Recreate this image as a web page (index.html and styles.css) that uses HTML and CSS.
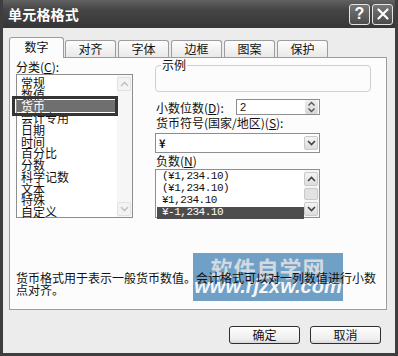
FILE: index.html
```html
<!DOCTYPE html>
<html lang="zh-CN">
<head>
    <meta charset="UTF-8">
    <title>单元格格式</title>
    <link rel="stylesheet" href="styles.css">
</head>
<body>
    <div class="window">
        <div class="titlebar">
            <span class="title">单元格格式</span>
            <div class="title-btns">
                <span class="tbtn">?</span>
                <span class="tbtn">
                    <svg width="12" height="12" viewBox="0 0 12 12"><path d="M1.5 1.5 L10.5 10.5 M10.5 1.5 L1.5 10.5" stroke="#fff" stroke-width="2.2" stroke-linecap="round"/></svg>
                </span>
            </div>
        </div>

        <div class="dialog">
            <div class="tabs">
                <div class="tab active">数字</div>
                <div class="tab">对齐</div>
                <div class="tab">字体</div>
                <div class="tab">边框</div>
                <div class="tab">图案</div>
                <div class="tab">保护</div>
            </div>

            <div class="panel">
                <div class="cols">
                    <div class="left">
                        <div class="lbl">分类(<u>C</u>):</div>
                        <div class="listbox cat">
                            <ul class="items">
                                <li>常规</li>
                                <li>数值</li>
                                <li class="picked">货币</li>
                                <li>会计专用</li>
                                <li>日期</li>
                                <li>时间</li>
                                <li>百分比</li>
                                <li>分数</li>
                                <li>科学记数</li>
                                <li>文本</li>
                                <li>特殊</li>
                                <li>自定义</li>
                            </ul>
                            <div class="vscroll">
                                <span class="sbtn off"><svg width="9" height="6" viewBox="0 0 9 6"><path d="M1 5 L4.5 1.5 L8 5" fill="none" stroke="#c4c4c4" stroke-width="1.6"/></svg></span>
                                <span class="track"></span>
                                <span class="sbtn off"><svg width="9" height="6" viewBox="0 0 9 6"><path d="M1 1 L4.5 4.5 L8 1" fill="none" stroke="#c4c4c4" stroke-width="1.6"/></svg></span>
                            </div>
                        </div>
                    </div>

                    <div class="right">
                        <div class="sample">
                            <span class="legend">示例</span>
                        </div>

                        <div class="row">
                            <span class="row-lbl">小数位数(<u>D</u>):</span>
                            <div class="spin">
                                <span class="spin-val">2</span>
                                <span class="spin-btns">
                                    <svg width="9" height="12" viewBox="0 0 9 12"><path d="M1.5 4.5 L4.5 1.5 L7.5 4.5 M1.5 7.5 L4.5 10.5 L7.5 7.5" fill="none" stroke="#555" stroke-width="1.4"/></svg>
                                </span>
                            </div>
                        </div>

                        <div class="lbl2">货币符号(国家/地区)(<u>S</u>):</div>
                        <div class="combo">
                            <span class="combo-val">¥</span>
                            <span class="sbtn"><svg width="9" height="6" viewBox="0 0 9 6"><path d="M1 1 L4.5 4.5 L8 1" fill="none" stroke="#444" stroke-width="1.6"/></svg></span>
                        </div>

                        <div class="lbl3">负数(<u>N</u>)</div>
                        <div class="listbox neg">
                            <ul class="items nums">
                                <li>(¥1,234.10)</li>
                                <li>(¥1,234.10)</li>
                                <li>¥1,234.10</li>
                                <li class="sel">¥-1,234.10</li>
                            </ul>
                            <div class="vscroll">
                                <span class="sbtn"><svg width="9" height="6" viewBox="0 0 9 6"><path d="M1 5 L4.5 1.5 L8 5" fill="none" stroke="#444" stroke-width="1.6"/></svg></span>
                                <span class="thumb"></span>
                                <span class="track"></span>
                                <span class="sbtn"><svg width="9" height="6" viewBox="0 0 9 6"><path d="M1 1 L4.5 4.5 L8 1" fill="none" stroke="#444" stroke-width="1.6"/></svg></span>
                            </div>
                        </div>
                    </div>
                </div>

                <p class="desc">货币格式用于表示一般货币数值。会计格式可以对一列数值进行小数<br>点对齐。</p>
            </div>

            <div class="actions">
                <button class="btn">确定</button>
                <button class="btn">取消</button>
            </div>
        </div>

        <div class="watermark">
            <div class="wm-top">软件自学网</div>
            <div class="wm-url">www.rjzxw.com</div>
        </div>
    </div>
</body>
</html>
```

FILE: styles.css
```css
* {
    box-sizing: border-box;
    margin: 0;
    padding: 0;
}

body {
    width: 398px;
    height: 356px;
    overflow: hidden;
    background: #3a3a3a;
    font-family: "Noto Sans CJK SC", sans-serif;
    font-size: 12px;
    color: #111;
}

u {
    text-decoration: underline;
}

.window {
    position: relative;
    width: 398px;
    height: 356px;
    display: flex;
    flex-direction: column;
    padding: 0 3px 3px;
    background: #3e3e3e;
}

/* title bar */
.titlebar {
    height: 28px;
    display: flex;
    align-items: center;
    justify-content: space-between;
    padding: 0 2px 0 5px;
    background: linear-gradient(#626262, #454545 35%, #363636);
    color: #fff;
}

.title {
    font-size: 14px;
    font-weight: bold;
    line-height: 16px;
    letter-spacing: 0.2px;
}

.title-btns {
    display: flex;
    gap: 2px;
}

.tbtn {
    width: 21px;
    height: 21px;
    display: flex;
    align-items: center;
    justify-content: center;
    border: 1px solid #e4e4e4;
    border-radius: 3px;
    background: linear-gradient(#777, #4b4b4b);
    font-family: "Liberation Sans", sans-serif;
    font-size: 16px;
    font-weight: bold;
    color: #fff;
}

/* dialog body */
.dialog {
    flex: 1;
    display: flex;
    flex-direction: column;
    padding: 9px 8px 0 6px;
    background: #ececec;
}

.tabs {
    display: flex;
    align-items: flex-end;
    gap: 2px;
    height: 20px;
    position: relative;
    z-index: 1;
}

.tab {
    width: 51px;
    height: 17px;
    border: 1px solid #9c9c9c;
    border-bottom: none;
    border-radius: 3px 3px 0 0;
    background: linear-gradient(#fdfdfd, #e8e8e8);
    text-align: center;
    line-height: 16px;
}

.tab.active {
    width: 55px;
    height: 21px;
    margin-bottom: -1px;
    margin-right: -1px;
    background: #fcfcfc;
    line-height: 18px;
}

.panel {
    height: 253px;
    display: flex;
    flex-direction: column;
    border: 1px solid #9c9c9c;
    background: #fcfcfc;
    padding: 0 0 0 6px;
}

.cols {
    display: flex;
    gap: 22px;
}

.left {
    width: 117px;
}

.lbl {
    height: 16px;
    line-height: 16px;
    padding-top: 1px;
}

.listbox {
    display: flex;
    border: 1px solid #8e8e8e;
    background: #fff;
}

.listbox.cat {
    height: 144px;
}

.items {
    flex: 1;
    list-style: none;
    padding: 2px 0 0 4px;
}

.items li {
    height: 11.7px;
    line-height: 11.7px;
    white-space: nowrap;
}

.items li.picked {
    position: relative;
    margin-left: -4px;
    padding-left: 4px;
    height: 12px;
    background: #6f6f6f;
    color: #fff;
}

.items li.picked::before {
    content: "";
    position: absolute;
    left: -5px;
    right: -1px;
    top: -4px;
    bottom: -4px;
    border: 3px solid #353535;
}

.vscroll {
    width: 15px;
    display: flex;
    flex-direction: column;
    padding: 2px 1px 1px 0;
    background: #f6f6f6;
}

.track {
    flex: 1;
}

.sbtn {
    width: 14px;
    height: 14px;
    display: flex;
    align-items: center;
    justify-content: center;
    border: 1px solid #c9c9c9;
    border-radius: 2px;
    background: linear-gradient(#f4f4f4, #dcdcdc);
}

.sbtn.off {
    border-color: #e2e2e2;
    background: #f3f3f3;
}

.thumb {
    height: 12px;
    margin-top: 2px;
    border: 1px solid #c9c9c9;
    border-radius: 2px;
    background: #e2e2e2;
}

/* right side */
.right {
    width: 216px;
}

.sample {
    height: 27px;
    margin-top: 7px;
    border: 1px solid #cfcfcf;
    border-radius: 4px;
    padding-left: 5px;
}

.legend {
    display: block;
    width: max-content;
    margin-top: -7px;
    padding: 0 1px;
    line-height: 12px;
    background: #fcfcfc;
}

.row {
    display: flex;
    align-items: center;
    height: 16px;
    margin-top: 7px;
}

.row-lbl {
    width: 81px;
    padding-left: 1px;
}

.spin {
    width: 84px;
    height: 16px;
    display: flex;
    align-items: center;
    justify-content: space-between;
    border: 1px solid #8e8e8e;
    background: #fff;
    padding-left: 3px;
}

.spin-val {
    font-family: "Liberation Sans", sans-serif;
    font-size: 11px;
}

.spin-btns {
    width: 13px;
    height: 14px;
    display: flex;
    align-items: center;
    justify-content: center;
    margin-right: 1px;
    border-radius: 2px;
    background: linear-gradient(#eeeeee, #d6d6d6);
}

.lbl2 {
    height: 16px;
    line-height: 16px;
    padding-left: 1px;
}

.combo {
    width: 165px;
    height: 20px;
    margin-top: 2px;
    display: flex;
    align-items: center;
    justify-content: space-between;
    border: 1px solid #8e8e8e;
    background: #fff;
    padding: 0 1px 0 3px;
}

.combo-val {
    font-weight: bold;
    font-size: 11px;
}

.lbl3 {
    height: 15px;
    line-height: 15px;
    padding-left: 1px;
}

.listbox.neg {
    width: 165px;
    height: 49px;
    margin-top: 1px;
}

.nums {
    padding: 1px 0 0 1px;
}

.nums li {
    font-family: "Liberation Mono", monospace;
    font-size: 11px;
    letter-spacing: -0.5px;
    padding-left: 5px;
    margin-bottom: 0.3px;
}

.nums li.sel {
    background: #4d4d4d;
    color: #fff;
}

.desc {
    position: relative;
    z-index: 3;
    margin-top: auto;
    padding: 0 0 13px 0;
    line-height: 12px;
    white-space: nowrap;
}

/* buttons */
.actions {
    display: flex;
    justify-content: flex-end;
    gap: 10px;
    padding: 16px 6px 0 0;
}

.btn {
    width: 71px;
    height: 18px;
    border: 1px solid #2e2e2e;
    border-radius: 3px;
    background: linear-gradient(#ffffff, #ececec 80%, #d8d8d8);
    font-family: "Noto Sans CJK SC", sans-serif;
    font-size: 12px;
    line-height: 14px;
    color: #111;
}

/* watermark overlay */
.watermark {
    position: absolute;
    z-index: 2;
    left: 193px;
    top: 253px;
    width: 150px;
    height: 48px;
    display: flex;
    flex-direction: column;
    align-items: center;
    background: rgb(112, 160, 198);
    padding-top: 2px;
}

.wm-top {
    font-size: 22px;
    font-weight: bold;
    line-height: 24px;
    color: #d3d9de;
    letter-spacing: 1px;
}

.wm-url {
    font-family: "Liberation Sans", sans-serif;
    font-size: 20px;
    font-weight: bold;
    font-style: italic;
    line-height: 20px;
    color: #f4f6f8;
    margin-top: -3px;
}
```
